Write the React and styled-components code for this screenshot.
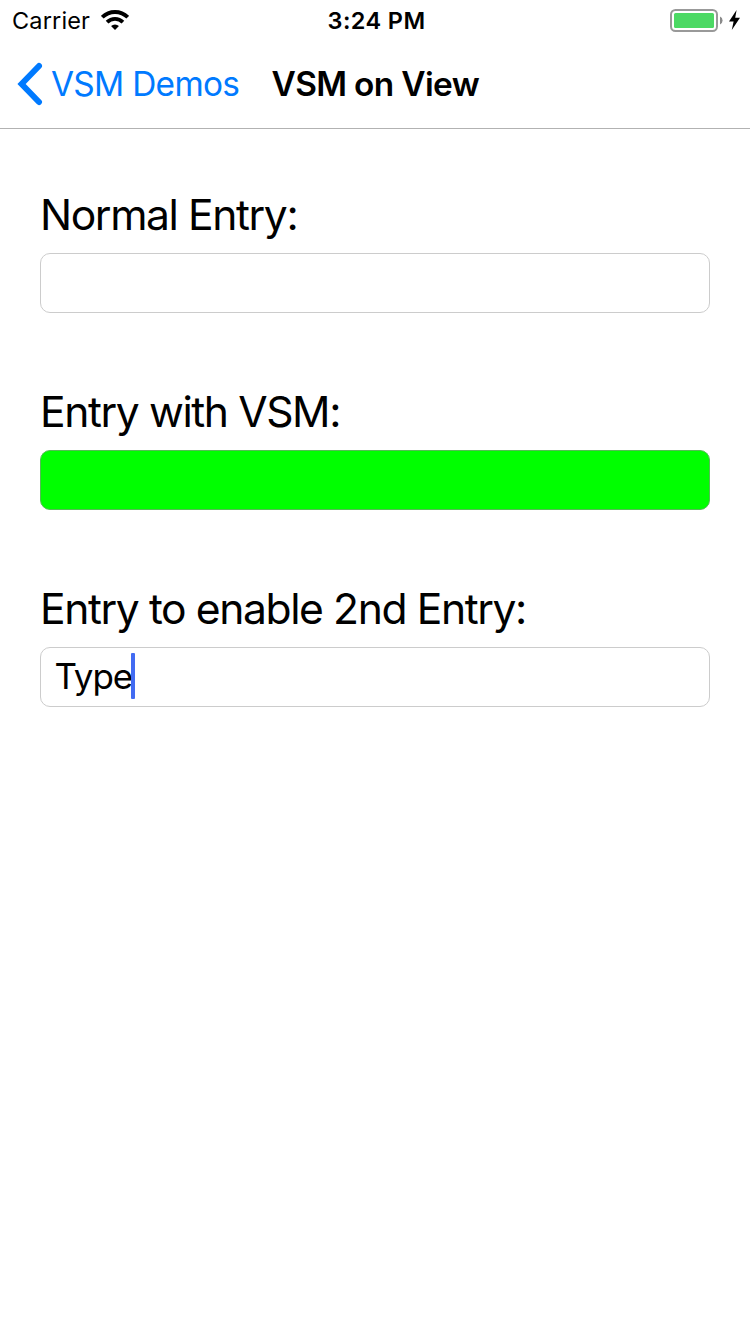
import React from 'react';
import styled, { createGlobalStyle } from 'styled-components';

const Global = createGlobalStyle`
  * { box-sizing: border-box; }
  body { margin: 0; background: #fff; color: #000; font-family: Inter, "Liberation Sans", sans-serif; }
`;
const Screen = styled.div`
  width: 750px;
  height: 1334px;
  display: flex;
  flex-direction: column;
  background: #fff;
`;
const StatusBar = styled.div`
  height: 40px;
  display: grid;
  grid-template-columns: 1fr auto 1fr;
  align-items: center;
  padding: 1px 9px 0 12px;
  font-size: 23.5px;
  line-height: 40px;
`;
const StatusSide = styled.div`
  display: flex;
  align-items: center;
  justify-content: ${(p) => (p.$end ? 'flex-end' : 'flex-start')};
  gap: ${(p) => (p.$end ? '5px' : '11px')};
  svg { margin-bottom: 2px; }
`;
const StatusText = styled.span`
  white-space: nowrap;
  font-weight: ${(p) => (p.$bold ? 600 : 400)};
  letter-spacing: ${(p) => p.$track || '0'};
`;
const NavBar = styled.header`
  height: 89px;
  display: flex;
  align-items: center;
  padding: 0 16px;
  border-bottom: 1px solid #b2b2b2;
`;
const BackLink = styled.div`
  display: flex;
  align-items: center;
  gap: 8px;
  width: 255.5px;
  color: #007aff;
  font-size: 33.4px;
  letter-spacing: -0.7px;
  white-space: nowrap;
`;
const Title = styled.h1`
  margin: 0;
  font-size: 33.4px;
  font-weight: 600;
  letter-spacing: -0.65px;
  white-space: nowrap;
`;
const Form = styled.main`
  display: flex;
  flex-direction: column;
  gap: 73px;
  padding: 60px 40px;
`;
const Field = styled.div`
  height: 124px;
  display: flex;
  flex-direction: column;
  justify-content: space-between;
`;
const Label = styled.label`
  font-size: 42.6px;
  line-height: 52px;
  white-space: nowrap;
  letter-spacing: -1.4px;
`;
const Entry = styled.div`
  height: 60px;
  display: flex;
  align-items: center;
  padding: 0 13.5px 2px;
  border: 1px solid ${(p) => (p.$fill ? '#55bb55' : '#cccccc')};
  border-radius: 10px;
  background: ${(p) => p.$fill || '#fff'};
  font-size: 35px;
  letter-spacing: -1.1px;
`;
const Caret = styled.i`
  width: 4px;
  height: 46px;
  margin-left: -1.3px;
  border-radius: 1px;
  background: #426bf2;
`;

export default function App() {
  return (
    <Screen>
      <Global />
      <StatusBar>
        <StatusSide>
          <StatusText $track="0.15px">Carrier</StatusText>
          <svg width="28" height="20" viewBox="0 0 28 20" fill="none" stroke="#000" strokeWidth="3.8">
            <path d="M1.27 7.27a18 18 0 0 1 25.46 0M6.08 12.08a11.2 11.2 0 0 1 15.84 0" />
            <path d="M14 20l-3.96-3.96a5.6 5.6 0 0 1 7.92 0z" fill="#000" stroke="none" />
          </svg>
        </StatusSide>
        <StatusText $bold $track="0.4px">3:24 PM</StatusText>
        <StatusSide $end>
          <svg width="54" height="23" viewBox="0 0 54 23">
            <rect x="0" y="1" width="46" height="21" rx="4.5" fill="none" stroke="#999" strokeWidth="2" transform="translate(1 0)" />
            <rect x="4" y="4" width="40" height="15" rx="1.5" fill="#4cd964" />
            <path d="M50 7.5a4.4 4.4 0 0 1 0 8z" fill="#8a8a8a" />
          </svg>
          <svg width="12" height="20" viewBox="0 0 12 20"><path d="M7.6 0 0 11.4h4.6L2.8 20 11 7.8H6.2z" /></svg>
        </StatusSide>
      </StatusBar>
      <NavBar>
        <BackLink>
          <svg width="27" height="44" viewBox="0 0 27 44" fill="none" stroke="#007aff" strokeWidth="6" strokeLinecap="round">
            <path d="M23 4 5.6 22 23 40" />
          </svg>
          VSM Demos
        </BackLink>
        <Title>VSM on View</Title>
      </NavBar>
      <Form>
        <Field><Label>Normal Entry:</Label><Entry /></Field>
        <Field><Label>Entry with VSM:</Label><Entry $fill="#00ff00" /></Field>
        <Field><Label>Entry to enable 2nd Entry:</Label><Entry>Type<Caret /></Entry></Field>
      </Form>
    </Screen>
  );
}
